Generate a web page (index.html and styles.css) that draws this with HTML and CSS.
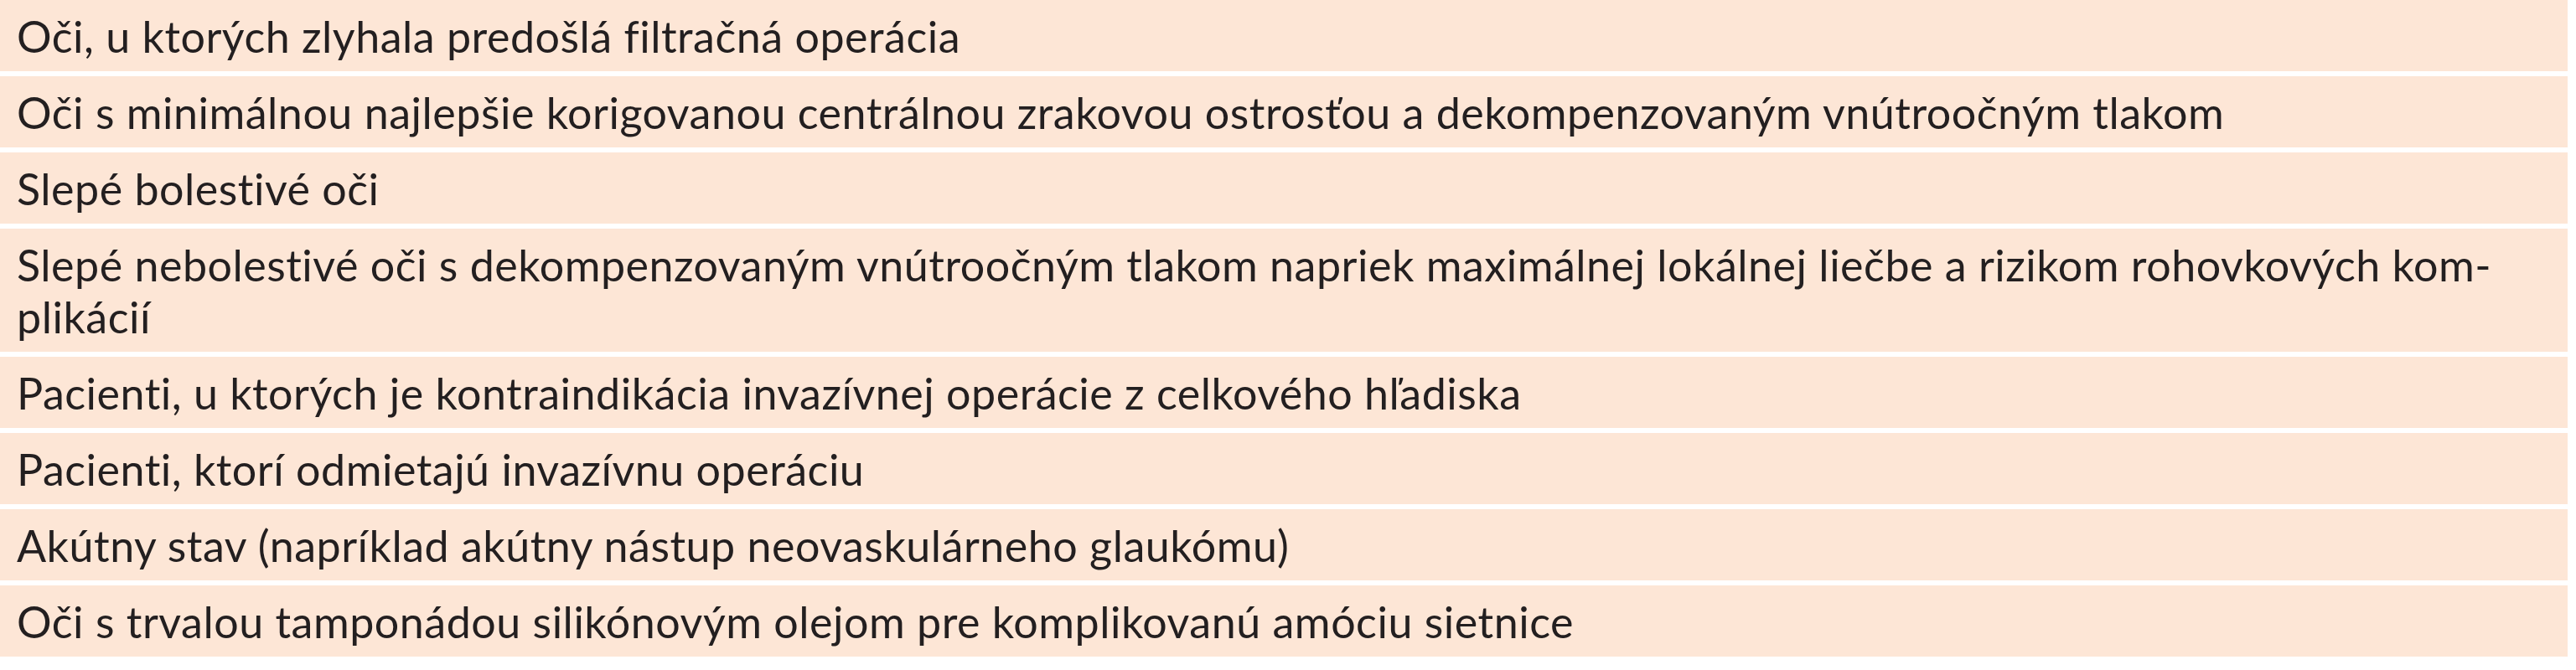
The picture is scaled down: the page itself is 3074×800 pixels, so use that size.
FILE: index.html
```html
<!DOCTYPE html>
<html lang="sk">
<head>
<meta charset="utf-8">
<link rel="stylesheet" href="styles.css">
</head>
<body>
<div class="table">
  <div class="row">Oči, u ktorých zlyhala predošlá filtračná operácia</div>
  <div class="row">Oči s minimálnou najlepšie korigovanou centrálnou zrakovou ostrosťou a dekompenzovaným vnútroočným tlakom</div>
  <div class="row">Slepé bolestivé oči</div>
  <div class="row">Slepé nebolestivé oči s dekompenzovaným vnútroočným tlakom napriek maximálnej lokálnej liečbe a rizikom rohovkových kom-<br>plikácií</div>
  <div class="row">Pacienti, u ktorých je kontraindikácia invazívnej operácie z celkového hľadiska</div>
  <div class="row">Pacienti, ktorí odmietajú invazívnu operáciu</div>
  <div class="row">Akútny stav (napríklad akútny nástup neovaskulárneho glaukómu)</div>
  <div class="row">Oči s trvalou tamponádou silikónovým olejom pre komplikovanú amóciu sietnice</div>
</div>
</body>
</html>
```
FILE: styles.css
```css
html, body {
  margin: 0;
  padding: 0;
  background: #ffffff;
}
.table {
  width: 3064px;
  display: flex;
  flex-direction: column;
  gap: 6px;
}
.row {
  background: #fde6d6;
  color: #231f20;
  font-family: Lato, "Noto Sans", sans-serif;
  font-size: 52px;
  letter-spacing: 0.5px;
  font-variant-ligatures: none;
  line-height: 62px;
  padding: 12px 20px 11px 20px;
  white-space: nowrap;
}
```
